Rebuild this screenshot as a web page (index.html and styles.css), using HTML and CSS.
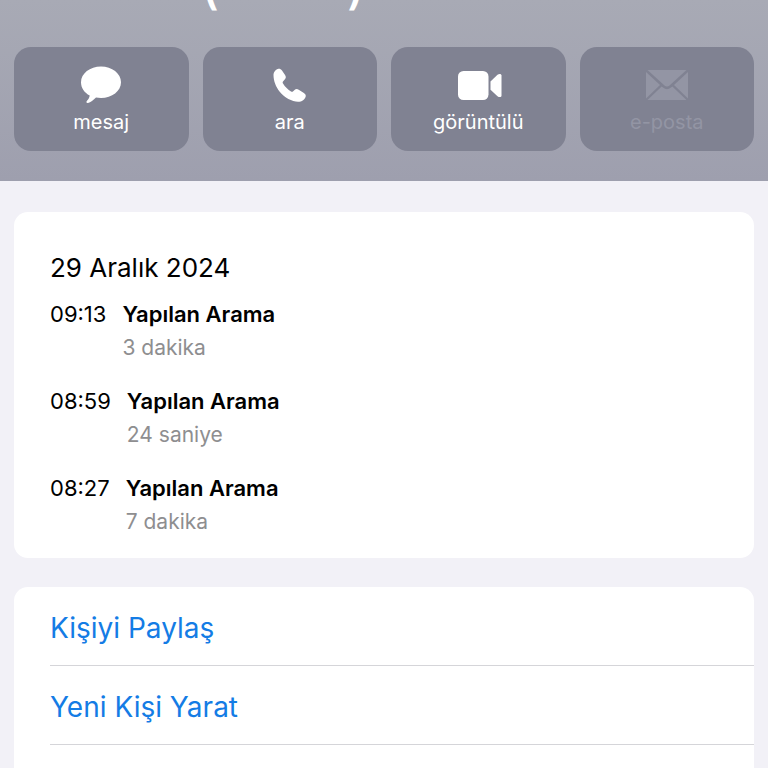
FILE: index.html
```html
<!DOCTYPE html>
<html lang="tr">
<head>
<meta charset="utf-8">
<meta name="viewport" content="width=device-width, initial-scale=1">
<title>Kişi</title>
<link rel="stylesheet" href="styles.css">
</head>
<body>
<header class="hero">
  <div class="hero-number"><span>(</span><span>)</span></div>
  <div class="actions">
    <button class="action" type="button">
      <svg class="icon" viewBox="0 0 48 40" aria-hidden="true"><path d="M24 1.500C35 1.500 44 8.500 44 17.200S35 33 24 33C22 33 20.500 32.800 19 32.500C16.500 35 13.500 37.500 11 38C9.300 38.300 9 36.800 10 35.800C11.600 34 12.500 32.300 12.700 30.500C7.500 27.700 4 23 4 17.200C4 8.500 13 1.500 24 1.500Z"/></svg>
      <span>mesaj</span>
    </button>
    <button class="action" type="button">
      <svg class="icon" viewBox="0 0 48 40" aria-hidden="true"><path d="M7.500 10C7.500 7 10 4 12.500 3.700C14 3.600 15 4.200 16 5.500L19.200 10.200C20.200 12 20 13 18.700 14.500L17.200 16.200C16.500 17 16.500 17.700 17 18.600C19 22 22 24.700 25 26.500C25.800 27 26.500 26.900 27.200 26.200L28.500 24.900C29.800 23.900 31.200 23.800 32.700 24.700L37.500 27.700C39.500 28.900 40 30 39.700 31.500C39 34.500 36 36.800 32 36.800C26 36.800 18.500 32.500 13.500 26.500C10 22 7.500 16 7.500 10Z"/></svg>
      <span>ara</span>
    </button>
    <button class="action" type="button">
      <svg class="icon" viewBox="0 0 48 40" aria-hidden="true"><rect x="4" y="6" width="30.500" height="29" rx="5.500"/><path d="M36.500 16.500L43.500 9.800C45 8.400 47.500 8.600 47.500 10.500V30.500C47.500 32.500 45 32.500 43.500 31.200L36.500 24.800Z"/></svg>
      <span>görüntülü</span>
    </button>
    <button class="action" type="button" disabled>
      <svg class="icon" viewBox="0 0 48 40" aria-hidden="true"><path d="M4.500 5H43.500L26.500 20.500Q24 22.500 21.500 20.500Z"/><path d="M3 7L17 20L3 33.500Z"/><path d="M45 7L31 20L45 33.500Z"/><path d="M18.700 21.500L20 22.500Q24 26 28 22.500L29.300 21.500L43.500 35H4.500Z"/></svg>
      <span>e-posta</span>
    </button>
  </div>
</header>
<main class="content">
  <section class="card calls">
    <h2 class="date">29 Aralık 2024</h2>
    <ul class="call-list">
      <li class="call"><time>09:13</time><div><strong>Yapılan Arama</strong><p>3 dakika</p></div></li>
      <li class="call"><time>08:59</time><div><strong>Yapılan Arama</strong><p>24 saniye</p></div></li>
      <li class="call"><time>08:27</time><div><strong>Yapılan Arama</strong><p>7 dakika</p></div></li>
    </ul>
  </section>
  <nav class="card links">
    <a href="#paylas">Kişiyi Paylaş</a>
    <a href="#yarat">Yeni Kişi Yarat</a>
  </nav>
</main>
</body>
</html>
```
FILE: styles.css
```css
* {
  box-sizing: border-box;
}

body {
  display: flex;
  flex-direction: column;
  height: 100vh;
  margin: 0;
  overflow: hidden;
  background: #f2f1f7;
  color: #000;
  font-family: Inter, "Liberation Sans", sans-serif;
  font-size: 22px;
}

.hero {
  flex: none;
  padding: 0 14px 30px;
  overflow: hidden;
  background: linear-gradient(#a8aab5, #9e9fae);
}

.hero-number {
  display: flex;
  justify-content: center;
  gap: 128px;
  height: 60px;
  margin-top: -13px;
  margin-right: 202px;
  color: #fff;
  font-size: 48px;
  font-weight: 500;
  line-height: 0;
}

.actions {
  display: grid;
  grid-template-columns: repeat(4, 1fr);
  gap: 14px;
}

.action {
  display: flex;
  flex-direction: column;
  align-items: center;
  gap: 4px;
  padding: 18px 0 16px;
  border: 0;
  border-radius: 17px;
  background: #808292;
  color: #fff;
  font: 400 20px/26px Inter, "Liberation Sans", sans-serif;
}

.action:disabled {
  color: #9395a4;
}

.icon {
  width: 48px;
  height: 40px;
  fill: currentColor;
}

.content {
  display: flex;
  flex: 1;
  flex-direction: column;
  gap: 29px;
  padding: 31px 14px 0;
}

.card {
  border-radius: 14px;
  background: #fff;
}

.calls {
  padding: 38px 36px 20px;
}

.date {
  margin: 0 0 12px;
  font-size: 26px;
  font-weight: 400;
  line-height: 36px;
}

.call-list {
  display: grid;
  gap: 21px;
  margin: 0;
  padding: 0;
  list-style: none;
}

.call {
  display: flex;
  gap: 16px;
  line-height: 33px;
}

.call strong {
  display: block;
  font-weight: 600;
}

.call p {
  margin: 0;
  color: #8e8e90;
  font-size: 21px;
}

.links {
  flex: 1;
  padding-left: 36px;
  border-radius: 14px 14px 0 0;
}

.links a {
  display: block;
  padding: 21px 0 17px;
  border-bottom: 1px solid #d5d5d9;
  color: #147ce5;
  font-size: 28px;
  line-height: 40px;
  text-decoration: none;
}
```
